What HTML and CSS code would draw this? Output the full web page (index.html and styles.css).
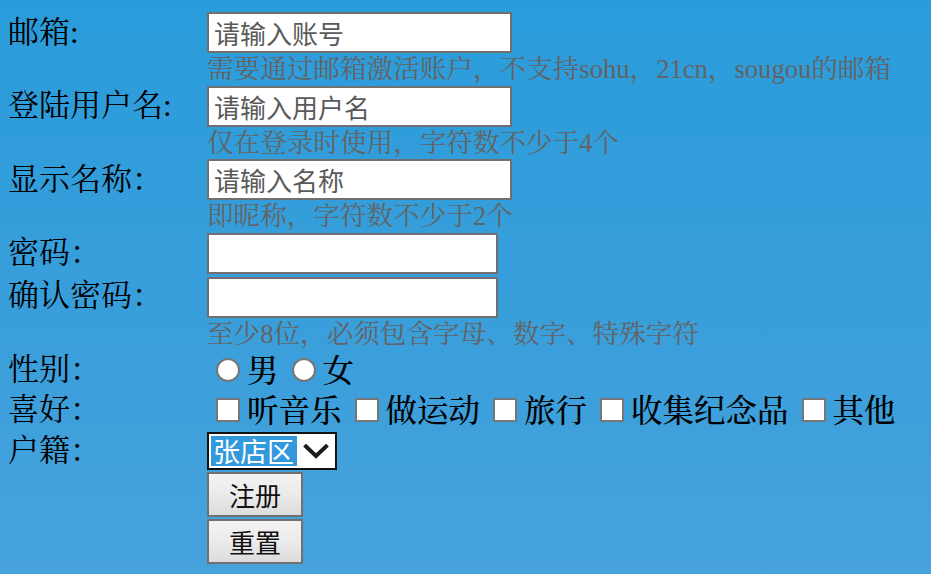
FILE: index.html
```html
<!DOCTYPE html>
<html lang="zh-CN">
<head>
<meta charset="utf-8">
<title>注册</title>
<link rel="stylesheet" href="styles.css">
</head>
<body>
<form class="reg">
  <label class="lbl">邮箱:</label>
  <input class="txt" type="text" placeholder="请输入账号">
  <div class="hint">需要通过邮箱激活账户，不支持sohu，21cn，sougou的邮箱</div>

  <label class="lbl">登陆用户名:</label>
  <input class="txt" type="text" placeholder="请输入用户名">
  <div class="hint">仅在登录时使用，字符数不少于4个</div>

  <label class="lbl">显示名称：</label>
  <input class="txt" type="text" placeholder="请输入名称">
  <div class="hint">即昵称，字符数不少于2个</div>

  <label class="lbl">密码：</label>
  <input class="txt pwd" type="password">

  <label class="lbl">确认密码：</label>
  <input class="txt pwd pwd2" type="password">
  <div class="hint">至少8位，必须包含字母、数字、特殊字符</div>

  <label class="lbl">性别：</label>
  <div class="opts">
    <input class="rb" type="radio" name="sex"><span class="opt">男</span>
    <input class="rb" type="radio" name="sex"><span class="opt">女</span>
  </div>

  <label class="lbl">喜好：</label>
  <div class="opts">
    <input class="cb" type="checkbox"><span class="opt">听音乐</span>
    <input class="cb" type="checkbox"><span class="opt">做运动</span>
    <input class="cb" type="checkbox"><span class="opt">旅行</span>
    <input class="cb" type="checkbox"><span class="opt">收集纪念品</span>
    <input class="cb" type="checkbox"><span class="opt">其他</span>
  </div>

  <label class="lbl lbl-sel">户籍：</label>
  <div class="sel">
    <span class="sel-val">张店区</span>
    <svg class="chev" width="26" height="16" viewBox="0 0 26 16"><polyline points="3,3.5 13,13 23,3.5" fill="none" stroke="#1a1a1a" stroke-width="4" stroke-linecap="square"/></svg>
  </div>

  <button class="btn" type="submit">注册</button>
  <button class="btn" type="reset">重置</button>
</form>
</body>
</html>
```

FILE: styles.css
```css
html, body {
  margin: 0;
  padding: 0;
}
body {
  width: 931px;
  height: 574px;
  overflow: hidden;
  background: linear-gradient(to bottom, #2a9cdb 0%, #3a9fdb 60%, #47a2dc 100%);
  font-family: "Liberation Serif", "Noto Serif CJK SC", "Noto Sans CJK SC", serif;
  color: #000;
}
.reg {
  display: grid;
  grid-template-columns: 199px auto;
  justify-content: start;
  padding: 12px 0 0 8px;
}
.lbl {
  grid-column: 1;
  align-self: center;
  font-size: 31px;
  line-height: 36px;
  white-space: nowrap;
}
.txt {
  grid-column: 2;
  display: block;
  box-sizing: border-box;
  width: 305px;
  height: 41px;
  margin: 0;
  padding: 0 5px;
  border: 2px solid #707070;
  background: #fff;
  font-family: "Noto Sans CJK SC", "Open Sans", sans-serif;
  font-size: 26px;
  color: #000;
  outline: none;
}
.txt::placeholder {
  color: #5a5a5a;
}
.pwd {
  width: 291px;
}
.pwd2 {
  margin-top: 3px;
}
.hint {
  grid-column: 2;
  height: 32.5px;
  line-height: 32.5px;
  font-size: 26.6px;
  color: #636363;
  white-space: nowrap;
}
.opts {
  grid-column: 2;
  display: flex;
  align-items: center;
  height: 40px;
  padding-left: 9px;
}
.rb, .cb {
  appearance: none;
  -webkit-appearance: none;
  box-sizing: border-box;
  width: 24px;
  height: 24px;
  margin: 0 7px 0 0;
  border: 2px solid #767676;
  background: #fff;
  flex: none;
}
.rb {
  border-radius: 50%;
}
.cb {
  border-radius: 1px;
}
.opt {
  font-size: 31.5px;
  font-weight: 500;
  line-height: 36px;
  margin: 3px 13px 0 0;
  white-space: nowrap;
}
.lbl-sel {
  margin-top: 2px;
}
.sel {
  grid-column: 2;
  margin-top: 2px;
  box-sizing: border-box;
  width: 130px;
  height: 38px;
  border: 2px solid #111;
  background: #fff;
  display: flex;
  align-items: center;
  padding: 0 0 0 2px;
}
.sel-val {
  background: #3399dd;
  color: #fff;
  font-family: "Noto Sans CJK SC", "Open Sans", sans-serif;
  font-size: 27px;
  line-height: 30px;
  height: 30px;
  padding: 0 3px 0 2px;
}
.chev {
  margin-left: 6px;
  display: block;
}
.btn {
  grid-column: 2;
  display: block;
  box-sizing: border-box;
  width: 96px;
  height: 45px;
  margin: 2px 0 0 0;
  padding: 0;
  border: 2px solid #707070;
  border-radius: 0;
  background: linear-gradient(to bottom, #f3f3f3 0%, #ebebeb 50%, #dcdcdc 100%);
  font-family: "Noto Sans CJK SC", "Open Sans", sans-serif;
  font-size: 26px;
  color: #111;
}
```
